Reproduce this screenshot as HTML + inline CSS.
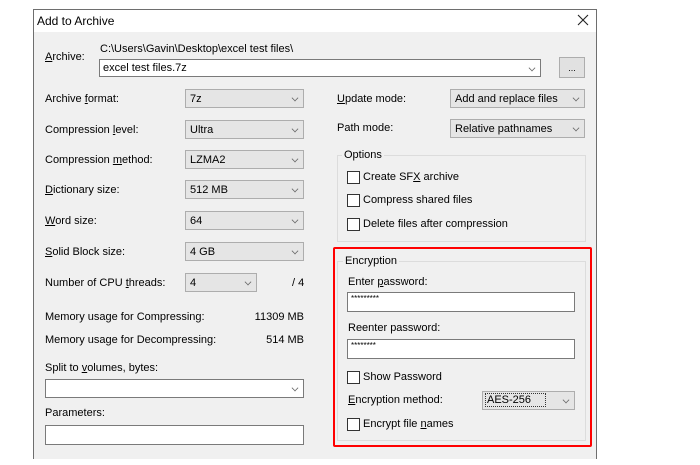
<!DOCTYPE html>
<html><head><style>
*{margin:0;padding:0;box-sizing:border-box}
body{width:700px;height:465px;background:#fff;position:relative;font-family:"Liberation Sans",sans-serif;font-size:11px;color:#000;overflow:hidden}
.a{position:absolute;white-space:nowrap}
.dlg{position:absolute;left:33px;top:9px;width:564px;height:450px;border:1px solid #6e6e6e;border-bottom:none;background:#f0f0f0}
.tb{position:absolute;left:34px;top:10px;width:562px;height:22px;background:#fff}
.sel{position:absolute;height:19px;background:#e5e5e5;border:1px solid #adadad;padding:3px 0 0 4px}
.inp{position:absolute;background:#fff;border:1px solid #7a7a7a;padding:2px 0 0 3px}
.chev{position:absolute;right:5px;top:5px;width:6px;height:6px;border-right:1px solid #666;border-bottom:1px solid #666;transform:rotate(45deg) scale(.8)}
.grp{position:absolute;border:1px solid #dcdcdc}
.cb{position:absolute;width:13px;height:13px;border:1px solid #333;background:#fff}
u{text-decoration:underline}
</style></head><body>
<div class="dlg"></div><div class="tb"></div>
<div class="a" style="left:37px;top:14px;font-size:12px">Add to Archive</div>
<svg class="a" style="left:577px;top:14px" width="12" height="12"><path d="M1 1L11 11M11 1L1 11" stroke="#222" stroke-width="1.1"/></svg>

<div class="a" style="left:45px;top:51px"><u>A</u>rchive:</div>
<div class="a" style="left:100px;top:43px">C:\Users\Gavin\Desktop\excel test files\</div>
<div class="inp" style="left:99px;top:59px;width:442px;height:18px">excel test files.7z<div class="chev"></div></div>
<div class="a" style="left:559px;top:57px;width:26px;height:21px;border:1px solid #adadad;background:#e1e1e1;text-align:center;font-size:9px;padding-top:5px">...</div>

<div class="a" style="left:45px;top:93px">Archive <u>f</u>ormat:</div>
<div class="sel" style="left:185px;top:89px;width:119px">7z<div class="chev"></div></div>
<div class="a" style="left:45px;top:124px">Compression <u>l</u>evel:</div>
<div class="sel" style="left:185px;top:120px;width:119px">Ultra<div class="chev"></div></div>
<div class="a" style="left:45px;top:154px">Compression <u>m</u>ethod:</div>
<div class="sel" style="left:185px;top:150px;width:119px">LZMA2<div class="chev"></div></div>
<div class="a" style="left:45px;top:184px"><u>D</u>ictionary size:</div>
<div class="sel" style="left:185px;top:180px;width:119px">512 MB<div class="chev"></div></div>
<div class="a" style="left:45px;top:215px"><u>W</u>ord size:</div>
<div class="sel" style="left:185px;top:211px;width:119px">64<div class="chev"></div></div>
<div class="a" style="left:45px;top:246px"><u>S</u>olid Block size:</div>
<div class="sel" style="left:185px;top:242px;width:119px">4 GB<div class="chev"></div></div>
<div class="a" style="left:45px;top:277px">Number of CPU <u>t</u>hreads:</div>
<div class="sel" style="left:185px;top:273px;width:72px">4<div class="chev"></div></div>
<div class="a" style="left:292px;top:277px">/ 4</div>
<div class="a" style="left:45px;top:311px">Memory usage for Compressing:</div>
<div class="a" style="left:244px;top:311px;width:60px;text-align:right">11309 MB</div>
<div class="a" style="left:45px;top:334px">Memory usage for Decompressing:</div>
<div class="a" style="left:244px;top:334px;width:60px;text-align:right">514 MB</div>
<div class="a" style="left:45px;top:362px">Split to <u>v</u>olumes, bytes:</div>
<div class="inp" style="left:45px;top:379px;width:259px;height:19px"><div class="chev"></div></div>
<div class="a" style="left:45px;top:407px">Parameters:</div>
<div class="inp" style="left:45px;top:425px;width:259px;height:20px"></div>

<div class="a" style="left:337px;top:93px"><u>U</u>pdate mode:</div>
<div class="sel" style="left:450px;top:89px;width:135px">Add and replace files<div class="chev"></div></div>
<div class="a" style="left:337px;top:122px">Path mode:</div>
<div class="sel" style="left:450px;top:119px;width:135px">Relative pathnames<div class="chev"></div></div>

<div class="grp" style="left:337px;top:155px;width:249px;height:87px"></div>
<div class="a" style="left:342px;top:149px;background:#f0f0f0;padding:0 2px">Options</div>
<div class="cb" style="left:347px;top:171px"></div><div class="a" style="left:363px;top:171px">Create SF<u>X</u> archive</div>
<div class="cb" style="left:347px;top:194px"></div><div class="a" style="left:363px;top:194px">Compress shared files</div>
<div class="cb" style="left:347px;top:218px"></div><div class="a" style="left:363px;top:218px">Delete files after compression</div>

<div class="grp" style="left:337px;top:261px;width:249px;height:180px"></div>
<div class="a" style="left:343px;top:255px;background:#f0f0f0;padding:0 2px">Encryption</div>
<div class="a" style="left:348px;top:276px">Enter <u>p</u>assword:</div>
<div class="inp" style="left:347px;top:292px;width:228px;height:20px;font-size:8px;padding-top:1px">*********</div>
<div class="a" style="left:348px;top:322px">Reenter password:</div>
<div class="inp" style="left:347px;top:339px;width:228px;height:20px;font-size:8px;padding-top:1px">********</div>
<div class="cb" style="left:347px;top:371px"></div><div class="a" style="left:363px;top:371px">Show Password</div>
<div class="a" style="left:348px;top:394px"><u>E</u>ncryption method:</div>
<div class="sel" style="left:482px;top:391px;width:93px;padding:2px 0 0 2px"><span style="border:1px dotted #333;padding:0 14px 0 1px">AES-256</span><div class="chev"></div></div>
<div class="cb" style="left:347px;top:418px"></div><div class="a" style="left:363px;top:418px">Encrypt file <u>n</u>ames</div>

<div class="a" style="left:333px;top:247px;width:259px;height:200px;border:2px solid #f00;border-radius:2px"></div>
</body></html>
